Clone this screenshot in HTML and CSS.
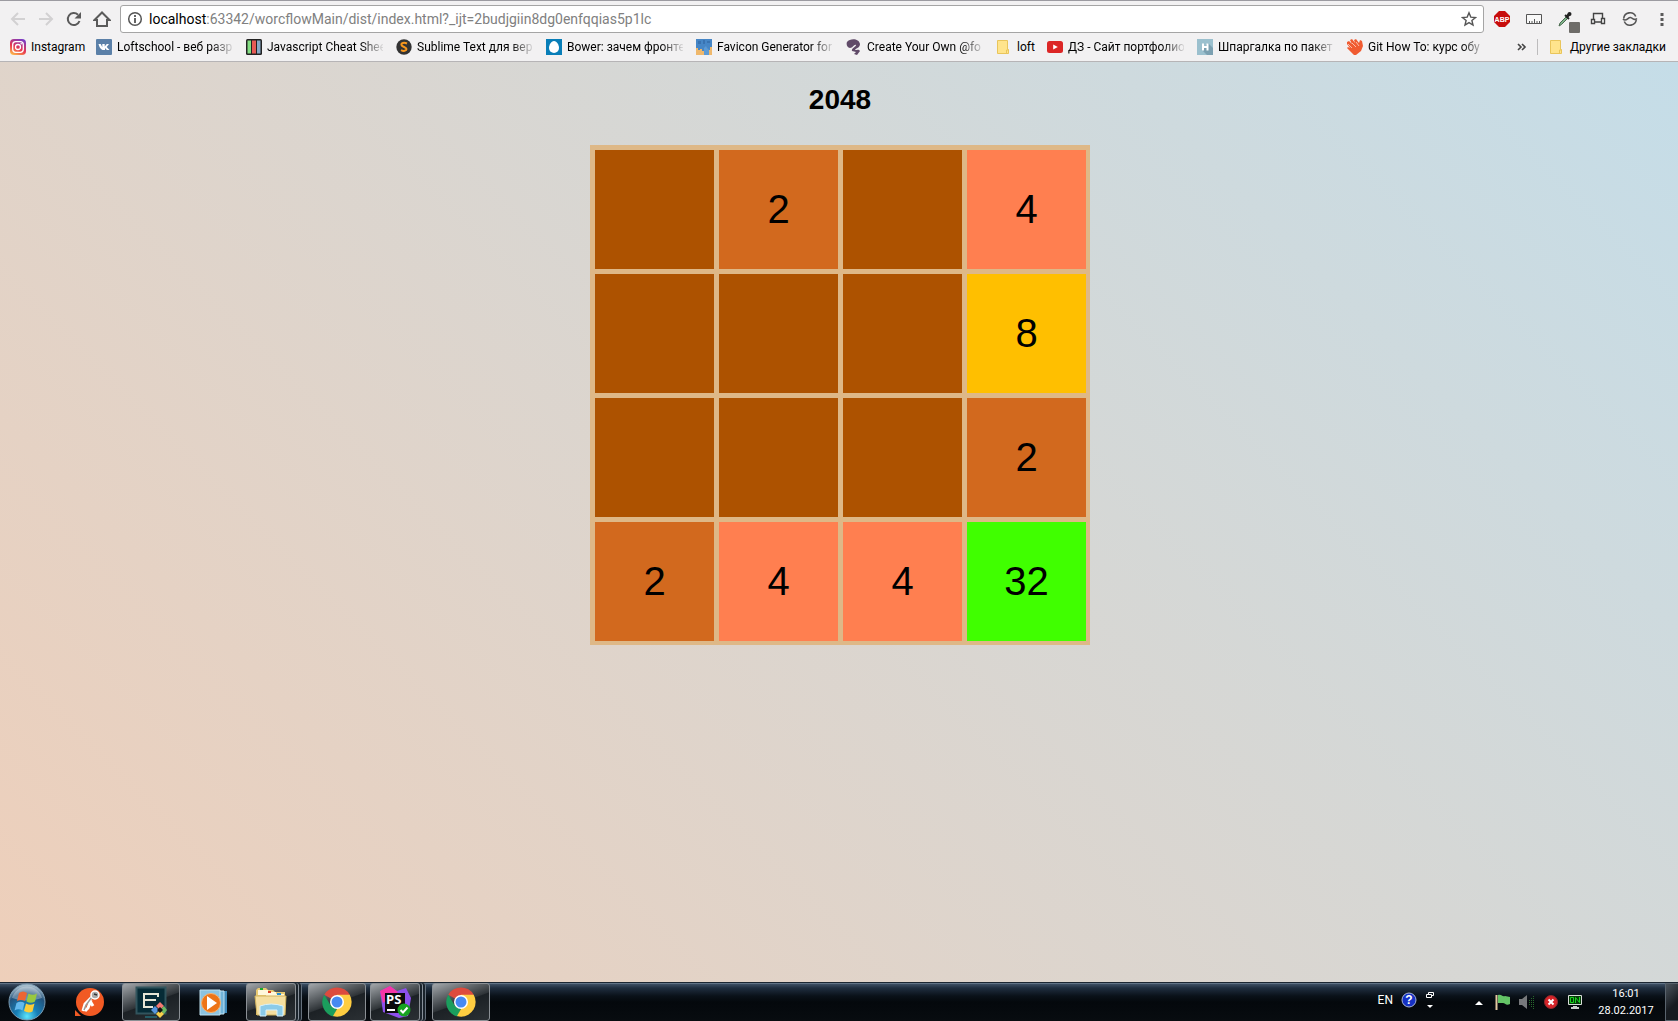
FILE: index.html
```html
<!DOCTYPE html>
<html lang="ru">
<head>
<meta charset="utf-8">
<title>2048</title>
<link rel="stylesheet" href="styles.css">
</head>
<body>
<header class="chrome">
  <div class="toolbar">
    <nav class="nav" aria-label="Navigation">
      <button class="nav-btn nav-btn-off" aria-label="Back"><svg width="16" height="16" viewBox="0 0 16 16"><path d="M15 8H2M8 2L2 8l6 6" fill="none" stroke="currentColor" stroke-width="2"/></svg></button>
      <button class="nav-btn nav-btn-off" aria-label="Forward"><svg width="16" height="16" viewBox="0 0 16 16"><path d="M1 8h13M8 2l6 6-6 6" fill="none" stroke="currentColor" stroke-width="2"/></svg></button>
      <button class="nav-btn" aria-label="Reload"><svg width="16" height="16" viewBox="0 0 16 16"><path d="M13.500 10A6 6 0 1 1 12 3.700" fill="none" stroke="currentColor" stroke-width="2"/><path d="M15 1v6.500H8.500z" fill="currentColor"/></svg></button>
      <button class="nav-btn" aria-label="Home"><svg width="18" height="16" viewBox="0 0 18 16"><path d="M1.500 9L9 1.500 16.500 9H14v6H4V9z" fill="none" stroke="currentColor" stroke-width="2"/></svg></button>
    </nav>
    <div class="omnibox">
      <svg width="16" height="16" viewBox="0 0 16 16"><circle cx="8" cy="8" r="6.300" fill="none" stroke="#555" stroke-width="1.500"/><path d="M8 7v5M8 4v2" stroke="#555" stroke-width="1.800"/></svg>
      <div class="url" role="textbox" aria-label="Address"><span class="url-host">localhost</span>:63342/worcflowMain/dist/index.html?_ijt=2budjgiin8dg0enfqqias5p1lc</div>
      <button class="star" aria-label="Bookmark this page"><svg width="16" height="16" viewBox="0 0 16 16"><path d="M8 1.800l1.800 4.300 4.700.4-3.600 3 1.100 4.600L8 11.600l-4 2.500 1.100-4.600-3.600-3 4.700-.4z" fill="none" stroke="#555" stroke-width="1.400"/></svg></button>
    </div>
    <div class="extensions">
      <button class="ext-btn" aria-label="Adblock Plus"><svg width="16" height="16" viewBox="0 0 16 16"><path d="M5 0h6l5 5v6l-5 5H5l-5-5V5z" fill="#c70d0c"/><text class="abp" x="8" y="11" text-anchor="middle">ABP</text></svg></button>
      <button class="ext-btn" aria-label="Ruler"><svg width="16" height="16" viewBox="0 0 16 16"><path d="M.5 3.500h15v9H.5zM3.500 12V10M6 12v-2M8.500 12V8M11 12v-2M13.500 12V10" fill="#f8f8f8" stroke="#555"/></svg></button>
      <button class="ext-btn" aria-label="Color picker"><svg width="18" height="16" viewBox="0 0 18 16"><path d="M2 15l1-3 6-6 1.500 1.500-6 6z" fill="#7fb28b" stroke="#4b6b50"/><path d="M8 4l4 4" stroke="#222" stroke-width="1.800"/><path d="M9.500 6l3-3" stroke="#222" stroke-width="3"/><circle cx="12.500" cy="3" r="2" fill="#222"/></svg><span class="ext-badge"></span></button>
      <button class="ext-btn" aria-label="Devices"><svg width="16" height="16" viewBox="0 0 16 16"><path d="M3.500 8V2.500h9V7M5 11h6" fill="none" stroke="#444" stroke-width="1.400"/><path d="M1.500 8.500h3v4h-3zM11.500 7.500h3v5h-3z" fill="#fff" stroke="#444" stroke-width="1.400"/></svg></button>
      <button class="ext-btn" aria-label="Sync"><svg width="16" height="16" viewBox="0 0 16 16"><path d="M1.700 7.500a6.300 6.300 0 0 1 12-2M14.300 8.500a6.300 6.300 0 0 1-12 2" fill="none" stroke="#555" stroke-width="1.600"/><path d="M1 8c3 3.500 5-2 7.500-1.500S12 10 15 7.500" fill="none" stroke="#555" stroke-width="1.600"/></svg></button>
      <button class="ext-btn" aria-label="Menu"><svg width="16" height="16" viewBox="0 0 16 16"><path d="M6.500 2h3v3h-3zM6.500 7h3v3h-3zM6.500 12h3v3h-3z" fill="#5a5a5a"/></svg></button>
    </div>
  </div>
  <nav class="bookmarks" aria-label="Bookmarks">
    <a class="mark mark-instagram" href="#"><svg width="16" height="16" viewBox="0 0 16 16"><defs><linearGradient id="insta" x1="0.200" y1="1" x2="0.700" y2="0"><stop offset="0" stop-color="#fdb94a"/><stop offset=".45" stop-color="#e8364f"/><stop offset="1" stop-color="#7a3cc4"/></linearGradient></defs><rect width="16" height="16" rx="4" fill="url(#insta)"/><rect x="2.700" y="2.700" width="10.600" height="10.600" rx="3" fill="none" stroke="#fff" stroke-width="1.300"/><circle cx="8" cy="8" r="2.500" fill="none" stroke="#fff" stroke-width="1.300"/><circle cx="11.200" cy="4.800" r=".8" fill="#fff"/></svg><span class="mark-text">Instagram</span></a>
    <a class="mark" href="#"><svg width="16" height="16" viewBox="0 0 16 16"><rect width="16" height="16" rx="1" fill="#5b80a8"/><path d="M2.500 5h2.200l1.600 3.200V5h2.400v2.400L10.800 5H13l-2.300 3 2.800 3h-2.600L9 9v2H7.500C5 11 3.500 8.500 2.500 5z" fill="#fff"/></svg><span class="mark-text mark-fade">Loftschool - веб разр</span></a>
    <a class="mark" href="#"><svg width="16" height="16" viewBox="0 0 16 16"><rect width="16" height="16" rx="1.500" fill="#222"/><path d="M1.500 1.500h3.500v13H1.500z" fill="#84df83"/><path d="M6 1.500h4v13H6z" fill="#e65a54"/><path d="M11 1.500h3.500v13H11z" fill="#88a8c5"/></svg><span class="mark-text mark-fade">Javascript Cheat Shee</span></a>
    <a class="mark" href="#"><svg width="16" height="16" viewBox="0 0 16 16"><circle cx="8" cy="8" r="7.700" fill="#333"/><path d="M11 4.500C8 3 5 4 5.500 6s5 2 5 4-3 2.500-5.500 1.200" fill="none" stroke="#f8971d" stroke-width="2"/></svg><span class="mark-text mark-fade">Sublime Text для вер</span></a>
    <a class="mark" href="#"><svg width="16" height="16" viewBox="0 0 16 16"><path d="M0 0h16v16H0z" fill="#087eb8"/><path d="M8 2c3 0 5 4 5 7a5 5 0 0 1-10 0c0-3 2-7 5-7z" fill="#fff"/></svg><span class="mark-text mark-fade">Bower: зачем фронте</span></a>
    <a class="mark" href="#"><svg width="16" height="16" viewBox="0 0 16 16"><path d="M0 0h16v16H0z" fill="#4686c6"/><path d="M2 2h3v3H2zM7 1h2v4H7zM11 2h3v2h-3z" fill="#3973b1"/><path d="M0 9h2v2h2v-1h2v2h2v4H0zM14 8h2v8h-3v-5h1z" fill="#efb86c"/><path d="M8 9l2-2 1 2 2 2v5H8z" fill="#5c9bd6"/></svg><span class="mark-text mark-fade">Favicon Generator for</span></a>
    <a class="mark" href="#"><svg width="16" height="16" viewBox="0 0 16 16"><path d="M1 3C4-1 13-1 14 5c0 4-4 4-5 6 2 0 4-1 5 1l-3 4-3-1 2-2-4-1c-1-3 4-4 4-6-2-1-3 3-6 3S0 5 1 3z" fill="#614b69"/></svg><span class="mark-text mark-fade">Create Your Own @fo</span></a>
    <a class="mark mark-loft" href="#"><svg width="16" height="16" viewBox="0 0 16 16"><path d="M1.500 1.500h10v9h1v4h-11z" fill="#ffe48c" stroke="#e9c55b"/><path d="M10.500 14v-3h2" fill="none" stroke="#e9c55b"/></svg><span class="mark-text">loft</span></a>
    <a class="mark" href="#"><svg width="16" height="16" viewBox="0 0 16 16"><rect y="2" width="16" height="12" rx="2.500" fill="#dc2626"/><path d="M6.200 5.500l4.600 2.500-4.600 2.500z" fill="#fff"/></svg><span class="mark-text mark-fade">ДЗ - Сайт портфолио</span></a>
    <a class="mark" href="#"><svg width="16" height="16" viewBox="0 0 16 16"><path d="M0 0h16v16H0z" fill="#9bc0ce"/><path d="M11 4l5 5v7h-6l-5-5z" fill="#7ba0b1"/><path d="M6 4.500v7M10.500 4.500v7M6 8h4.500" stroke="#fff" stroke-width="2" fill="none"/></svg><span class="mark-text mark-fade">Шпаргалка по пакет</span></a>
    <a class="mark" href="#"><svg width="16" height="16" viewBox="0 0 16 16"><path d="M0 3l2-1 3 3-2-4 2-1 3 4-1-3 2-1 3 4 1-3 2 1 1 5-2 5-5 4H7L0 9l1-1 2 1-3-4z" fill="#f05b31"/><path d="M1 5l4 4M5 4l4 4M9 3l3 4" stroke="#ffd6c7" stroke-width=".8"/></svg><span class="mark-text mark-fade">Git How To: курс обу</span></a>
    <div class="mark-end">
      <button class="more" aria-label="More bookmarks"><svg width="10" height="8" viewBox="0 0 10 8"><path d="M1 1l3 3-3 3M5 1l3 3-3 3" fill="none" stroke="#444" stroke-width="1.600"/></svg></button>
      <a class="mark mark-other" href="#"><svg width="16" height="16" viewBox="0 0 16 16"><path d="M1.500 1.500h10v9h1v4h-11z" fill="#ffe48c" stroke="#e9c55b"/><path d="M10.500 14v-3h2" fill="none" stroke="#e9c55b"/></svg><span class="mark-text">Другие закладки</span></a>
    </div>
  </nav>
</header>

<main class="page">
  <h1 class="title">2048</h1>
  <div class="board">
    <div class="cell"></div><div class="cell cell-2">2</div><div class="cell"></div><div class="cell cell-4">4</div>
    <div class="cell"></div><div class="cell"></div><div class="cell"></div><div class="cell cell-8">8</div>
    <div class="cell"></div><div class="cell"></div><div class="cell"></div><div class="cell cell-2">2</div>
    <div class="cell cell-2">2</div><div class="cell cell-4">4</div><div class="cell cell-4">4</div><div class="cell cell-32">32</div>
  </div>
</main>

<footer class="taskbar">
  <button class="start" aria-label="Start"><svg width="38" height="38" viewBox="0 0 38 38"><defs><radialGradient id="orb" cx=".5" cy=".9" r=".85"><stop offset="0" stop-color="#5ee6fb"/><stop offset=".35" stop-color="#1780b8"/><stop offset=".75" stop-color="#23537c"/><stop offset="1" stop-color="#a5bccb"/></radialGradient></defs><circle cx="19" cy="19" r="18" fill="url(#orb)" stroke="#7c9db4"/><path d="M4 15a15.500 15.500 0 0 1 30 0q-15 5-30 0z" fill="#fff" opacity=".3"/><path d="M11 10q4-3 8 0l-2 8q-4-2-8 0z" fill="#ec6634"/><path d="M20.500 10.500q4 2.500 8.500 0l-2 8q-4 2.500-8.500 0z" fill="#99c940"/><path d="M8.500 20q4-2.500 8 0l-2 7.500q-4-2.500-8 0z" fill="#63b9ee"/><path d="M18 20.500q4 2.500 8.500 0l-2 8q-4 2-8.500-.5z" fill="#fccd37"/></svg></button>
  <div class="tasks">
    <button class="task" aria-label="Postman"><svg width="32" height="32" viewBox="0 0 32 32"><circle cx="17" cy="16" r="14" fill="#f15a24"/><path d="M2 24l6 6H2z" fill="#f15a24"/><path d="M19 11l-7 7-2 7M18 14l-3 8-3 3M17 15l3 5" fill="none" stroke="#fff" stroke-width="3"/><path d="M19 11l-6 8-2 5" fill="none" stroke="#999" stroke-width="1.500"/><circle cx="22" cy="9" r="4" fill="#aaa" stroke="#fff" stroke-width="1.500"/><path d="M21 8l3 1" stroke="#333" stroke-width="1.500"/></svg></button>
    <button class="task task-open" aria-label="Code editor"><svg width="32" height="32" viewBox="0 0 32 32"><path d="M1.500 1.500h29v26h-29z" fill="#062b36" stroke="#31545d" stroke-width="2"/><path d="M23 11V8H9v13h9M9 14h12" fill="none" stroke="#e7e6d6" stroke-width="2"/><path d="M10 31h12" stroke="#245b65" stroke-width="2"/><path d="M25 16l4 4-4 4-4-4z" fill="#f47871"/><path d="M20 20l4 4-4 4-4-4z" fill="#5696df"/><path d="M29 20l3 4-3 4-4-4z" fill="#6eb862"/><path d="M25 24l4 4-4 4-4-4z" fill="#f5d04b"/><path d="M25 21l3 3-3 3-3-3z" fill="#111"/></svg></button>
    <button class="task" aria-label="Media Player"><svg width="32" height="32" viewBox="0 0 32 32"><path d="M10 5h20v22H10z" fill="#3e88b8"/><path d="M7 5h20v23H7z" fill="#72b4d9" stroke="#c0e0f0"/><path d="M3 4h20v25H3z" fill="#8bc3e1" stroke="#bfe0ef"/><circle cx="14" cy="17" r="9.500" fill="#ed7417" stroke="#f8b26d"/><path d="M10 10l10 7-10 7z" fill="#fff"/></svg></button>
    <button class="task task-open task-group" aria-label="Explorer"><svg width="34" height="32" viewBox="0 0 34 32"><path d="M2 4l2-2h8l2 2h5l2 2h10v23H2z" fill="#e8c971"/><path d="M4 4h10v5H4zM12 6h10v5H12zM20 8h10v5H20z" fill="#fff8dc"/><path d="M6 2h3v2H6z" fill="#18a92d"/><path d="M14 5h3v2h-3z" fill="#dc3c24"/><path d="M23 7h4v2h-4z" fill="#258ed0"/><path d="M1 10h31l-1 19H3z" fill="#f5dfa0" stroke="#d2b45e"/><path d="M6 30V20q11-4 23 0v10h-6v-6H12v6z" fill="#8bcbe9" stroke="#d9f2fb"/></svg></button>
    <button class="task task-open" aria-label="Chrome"><svg width="32" height="32" viewBox="0 0 32 32"><path d="M16 16L3.300 8.700A14.700 14.700 0 0 1 28.700 8.700z" fill="#dd4b3e"/><path d="M16 16V8.700h12.700A14.700 14.700 0 0 1 16 30.700z" fill="#ffcd41"/><path d="M3.300 8.700L10 20l6 3-3.500 7.500A14.700 14.700 0 0 1 3.300 8.700z" fill="#1b9e5d"/><path d="M22.300 19.700L16 30.700q-2 0-4-.6L16 23z" fill="#ffcd41"/><circle cx="16" cy="16" r="7" fill="#fff"/><circle cx="16" cy="16" r="5.500" fill="#4689f2"/></svg></button>
    <button class="task task-open task-group" aria-label="PhpStorm"><svg width="32" height="32" viewBox="0 0 32 32"><path d="M1 5L11 0l7 5 9-3 5 10-3 18-9 2L4 26z" fill="#8d50ec"/><path d="M1 5L11 0l8 6L4 17z" fill="#f636a6"/><path d="M6 7h20v20H6z" fill="#0b0b0d"/><path d="M8 24h8" stroke="#fff" stroke-width="2"/><text class="ps" x="7" y="18">PS</text><circle cx="25" cy="24" r="6.500" fill="#17a321"/><path d="M21.500 24l2.500 2.500 4.500-5" fill="none" stroke="#fff" stroke-width="2"/></svg></button>
    <button class="task task-open" aria-label="Chrome"><svg width="32" height="32" viewBox="0 0 32 32"><path d="M16 16L3.300 8.700A14.700 14.700 0 0 1 28.700 8.700z" fill="#dd4b3e"/><path d="M16 16V8.700h12.700A14.700 14.700 0 0 1 16 30.700z" fill="#ffcd41"/><path d="M3.300 8.700L10 20l6 3-3.500 7.500A14.700 14.700 0 0 1 3.300 8.700z" fill="#1b9e5d"/><path d="M22.300 19.700L16 30.700q-2 0-4-.6L16 23z" fill="#ffcd41"/><circle cx="16" cy="16" r="7" fill="#fff"/><circle cx="16" cy="16" r="5.500" fill="#4689f2"/></svg></button>
  </div>
  <div class="lang">
    <button class="lang-code">EN</button>
    <svg width="16" height="16" viewBox="0 0 16 16"><circle cx="8" cy="8" r="7" fill="#1631c4" stroke="#a8b4d8"/><text class="help" x="8" y="12" text-anchor="middle">?</text></svg>
    <svg width="10" height="18" viewBox="0 0 10 18"><path d="M3.500 3V1.500h5v3H7M1.500 3.500h5v3h-5z" fill="none" stroke="#fff"/><path d="M2 14h6l-3 3z" fill="#fff"/></svg>
  </div>
  <div class="tray">
    <button class="tray-btn" aria-label="Show hidden icons"><svg width="16" height="16" viewBox="0 0 16 16"><path d="M4 11h8L8 7z" fill="#fff"/></svg></button>
    <button class="tray-btn" aria-label="Action Center"><svg width="16" height="16" viewBox="0 0 16 16"><path d="M1.500 1v15" stroke="#e4c8a0" stroke-width="2"/><path d="M3 1c4-1 4 2 7 1l5 1v7c-4 2-5-1-7-1H3z" fill="#64c466"/></svg></button>
    <button class="tray-btn" aria-label="Volume"><svg width="16" height="16" viewBox="0 0 16 16"><path d="M0 5h3l5-4v14l-5-4H0z" fill="#77797c"/><path d="M10.500 6v5M12.500 4v9M14.500 2v13" stroke="#28682c" stroke-dasharray="1 1"/></svg></button>
    <button class="tray-btn" aria-label="Alert"><svg width="16" height="16" viewBox="0 0 16 16"><circle cx="8" cy="8" r="6.500" fill="#d52429" stroke="#8c272b"/><path d="M5.500 5.500l5 5M10.500 5.500l-5 5" stroke="#fff" stroke-width="2"/></svg></button>
    <button class="tray-btn" aria-label="Monitor"><svg width="16" height="16" viewBox="0 0 16 16"><path d="M1.500 1.500h13v9h-13z" fill="#053c08" stroke="#d8ddd8"/><path d="M3.500 3.500h3v5h-3zM8.500 9V3.500l4 5V3" fill="none" stroke="#19d51f"/><path d="M6 12h4v1h2v2H4v-2h2z" fill="#ccd0cc"/></svg></button>
  </div>
  <button class="clock"><span>16:01</span><span>28.02.2017</span></button>
  <button class="show-desktop" aria-label="Show desktop"></button>
</footer>
</body>
</html>
```
FILE: styles.css
```css
* {
  box-sizing: border-box;
}

body {
  margin: 0;
  min-height: 100vh;
  display: flex;
  flex-direction: column;
  font-family: Roboto, "Noto Sans", sans-serif;
  font-size: 12px;
  color: #000;
}

button {
  margin: 0;
  padding: 0;
  border: 0;
  background: none;
  color: inherit;
  font: inherit;
}

a {
  color: inherit;
  text-decoration: none;
}

svg {
  display: block;
  flex: none;
}

/* Browser window frame */
.chrome {
  background: #f2f1f2;
  border-top: 1px solid #9c9ba1;
  border-bottom: 1px solid #b6b4b6;
}

.toolbar {
  display: flex;
  align-items: center;
  padding-top: 4px;
}

.nav {
  display: flex;
  padding: 0 4px;
}

.nav-btn {
  width: 28px;
  height: 28px;
  display: grid;
  place-items: center;
  color: #5a5a5a;
}

.nav-btn-off {
  color: #d2d1d2;
}

.omnibox {
  flex: 1;
  min-width: 0;
  height: 28px;
  display: flex;
  align-items: center;
  gap: 6px;
  padding: 0 6px;
  border: 1px solid #a5a5a5;
  border-radius: 3px;
  background: #fff;
}

.url {
  flex: 1;
  min-width: 0;
  overflow: hidden;
  white-space: nowrap;
  font-size: 14px;
  line-height: 20px;
  color: #808080;
}

.url-host {
  color: #000;
}

.extensions {
  display: flex;
  padding-left: 2px;
}

.ext-btn {
  position: relative;
  width: 32px;
  height: 28px;
  display: grid;
  place-items: center;
}

.ext-badge {
  position: absolute;
  right: 2px;
  bottom: 0;
  width: 11px;
  height: 11px;
  border-radius: 1px;
  background: #6e6c69;
}

.abp {
  font: bold 7px "Liberation Sans", sans-serif;
  fill: #fff;
}

.bookmarks {
  height: 28px;
  display: flex;
  align-items: center;
  gap: 13px;
  padding: 0 12px 0 10px;
}

.mark {
  display: flex;
  align-items: center;
  gap: 5px;
}

.mark-text {
  white-space: nowrap;
  line-height: 16px;
}

.mark-fade {
  width: 116px;
  -webkit-mask-image: linear-gradient(to right, #000 94px, transparent 118px);
  mask-image: linear-gradient(to right, #000 94px, transparent 118px);
}

.mark-instagram .mark-text {
  width: 52px;
}

.mark-loft .mark-text {
  width: 17px;
}

.mark-end {
  display: flex;
  align-items: center;
  gap: 10px;
  margin-left: auto;
}

.mark-other {
  padding-left: 11px;
  border-left: 1px solid #bdbcbd;
}

/* Game */
.page {
  flex: 1;
  display: flex;
  flex-direction: column;
  align-items: center;
  padding: 22px 0 22px 2px;
  background: linear-gradient(45deg, #eecfba, #c5dde8);
  font-family: "Liberation Sans", Arial, sans-serif;
}

.title {
  margin: 0 0 29px;
  font-size: 28px;
  line-height: 32px;
}

.board {
  display: grid;
  grid-template-columns: repeat(4, 119px);
  grid-auto-rows: 119px;
  gap: 5px;
  padding: 5px 4px 4px 5px;
  background: #deb887;
}

.cell {
  display: grid;
  place-items: center;
  background: #ad5200;
  font-size: 40px;
}

.cell-2 {
  background: #d2691e;
}

.cell-4 {
  background: #ff7f50;
}

.cell-8 {
  background: #ffbf00;
}

.cell-32 {
  background: #40ff00;
}

/* Desktop taskbar */
.taskbar {
  height: 39px;
  display: flex;
  align-items: center;
  padding-left: 8px;
  border-top: 1px solid #1c2732;
  background: linear-gradient(#8598aa 0, #3d4f63 1px, #1f2e3f 5px, #0a1119 13px, #04080c 50%, #080c10);
  color: #fff;
}

.tasks {
  display: flex;
  gap: 4px;
  margin-left: 14px;
}

.task {
  width: 58px;
  height: 38px;
  display: grid;
  place-items: center;
  border: 1px solid transparent;
  border-radius: 3px;
}

.task-open {
  border-color: #8b9095;
  background: linear-gradient(160deg, #a3a7ab 0, #5d6266 30%, #2f3438 50%, #1c2125 52%, #2b3034);
}

.task-group {
  width: 50px;
  margin-right: 8px;
  box-shadow: 2px 0 0 #1a232b, 3px 0 0 #87909a, 5px 0 0 #1a232b, 6px 0 0 #65707c;
}

.ps {
  font: bold 13px "Open Sans", sans-serif;
  fill: #fff;
}

.help {
  font: bold 12px "Liberation Sans", sans-serif;
  fill: #fff;
}

.lang {
  display: flex;
  align-items: center;
  gap: 8px;
  margin-left: auto;
  padding-bottom: 4px;
}

.tray {
  display: flex;
  margin-left: 32px;
}

.tray-btn {
  width: 24px;
  height: 24px;
  display: grid;
  place-items: center;
}

.clock {
  width: 78px;
  display: flex;
  flex-direction: column;
  align-items: center;
  font-size: 11px;
  line-height: 17px;
}

.show-desktop {
  width: 13px;
  height: 38px;
  border: 1px solid #59636d;
  border-right: 0;
  background: linear-gradient(135deg, #4b545d, #171b20 60%);
}
```
